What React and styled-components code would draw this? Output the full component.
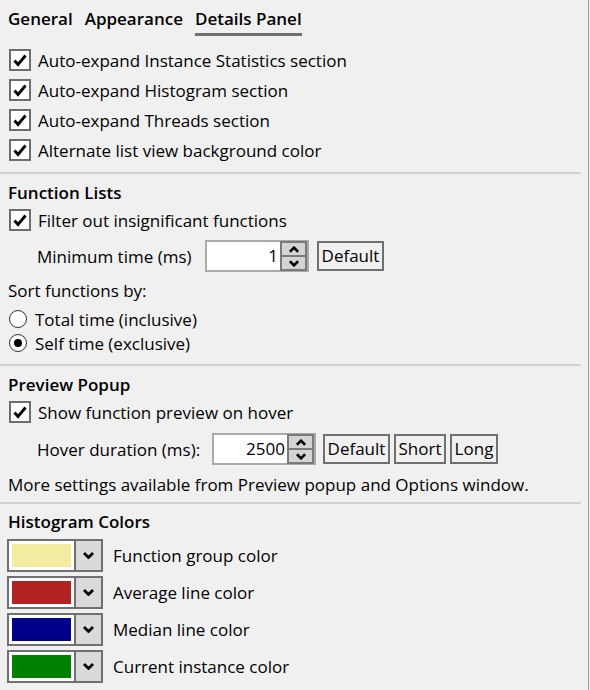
import React, { useState } from 'react'
import styled, { createGlobalStyle } from 'styled-components'

const Global = createGlobalStyle`
    html, body {
        margin: 0;
        padding: 0;
        background: #f0f0f0;
    }
    body {
        font-family: "Open Sans", "Noto Sans", sans-serif;
        color: #000;
    }
`

const Panel = styled.div`
    width: 589px;
    height: 690px;
    box-sizing: border-box;
    border-right: 1px solid #a0a0a0;
    background: #f0f0f0;
    display: flex;
    flex-direction: column;
    font-size: 17px;
    overflow: hidden;
`

const Tabs = styled.div`
    display: flex;
    gap: 12px;
    padding: 0 8px;
    height: 38px;
    align-items: flex-start;
`

const Tab = styled.div`
    font-weight: 600;
    font-size: 17px;
    padding-top: 7px;
    height: 26px;
    line-height: 24px;
    border-bottom: 3px solid ${p => (p.active ? '#707070' : 'transparent')};
    box-sizing: content-box;
`

const Section = styled.div`
    display: flex;
    flex-direction: column;
    padding: 0 8px;
    margin-top: ${p => p.top || 0}px;
`

const Separator = styled.div`
    width: 581px;
    height: 2px;
    background: #d2d2d2;
    margin-top: ${p => p.top || 0}px;
`

const Header = styled.div`
    height: 24px;
    line-height: 24px;
    font-weight: 600;
    margin-top: ${p => p.top || 0}px;
`

const Text = styled.div`
    height: 24px;
    line-height: 24px;
    margin-top: ${p => p.top || 0}px;
`

const CheckRow = styled.label`
    display: flex;
    align-items: center;
    gap: 7px;
    height: 30px;
    padding-left: 1px;
`

const Box = styled.span`
    width: 18px;
    height: 18px;
    border: 2px solid #6e6e6e;
    background: #fff;
    display: flex;
    align-items: center;
    justify-content: center;
    flex-shrink: 0;
`

const RadioRow = styled.label`
    display: flex;
    align-items: center;
    gap: 8px;
    height: 24px;
    padding-left: 1px;
`

const Circle = styled.span`
    width: 16px;
    height: 16px;
    border: 1.5px solid #333;
    border-radius: 50%;
    background: #fff;
    display: flex;
    align-items: center;
    justify-content: center;
    flex-shrink: 0;
    &::after {
        content: '';
        width: 8px;
        height: 8px;
        border-radius: 50%;
        background: ${p => (p.on ? '#000' : 'transparent')};
    }
`

const FieldRow = styled.div`
    display: flex;
    align-items: center;
    height: 32px;
    padding-left: 29px;
    margin-top: ${p => p.top || 0}px;
`

const FieldLabel = styled.span`
    width: ${p => p.w}px;
`

const Spin = styled.div`
    width: 104px;
    height: 32px;
    box-sizing: border-box;
    border: 2px solid #aaaaaa;
    background: #fff;
    display: flex;
    align-items: stretch;
    margin-right: ${p => p.gap}px;
`

const SpinValue = styled.div`
    flex: 1;
    text-align: right;
    line-height: 28px;
    padding-right: 2px;
`

const SpinButtons = styled.div`
    width: 23px;
    display: flex;
    flex-direction: column;
    border: 2px solid #7a7a7a;
    margin: -1px 0;
    background: #d4d4d4;
    & > span {
        flex: 1;
        display: flex;
        align-items: center;
        justify-content: center;
    }
    & > span + span {
        border-top: 2px solid #7a7a7a;
    }
`

const Button = styled.button`
    height: 30px;
    width: ${p => p.w}px;
    box-sizing: border-box;
    border: 2px solid #707070;
    background: #f0f0f0;
    font-family: inherit;
    font-size: 17px;
    padding: 0;
    margin-right: 4px;
    color: #000;
    line-height: 26px;
`

const ColorRow = styled.div`
    display: flex;
    align-items: center;
    gap: 10px;
    height: 33px;
    margin-top: ${p => p.top || 0}px;
    margin-left: -1px;
`

const ColorCombo = styled.div`
    width: 96px;
    height: 33px;
    box-sizing: border-box;
    border: 2px solid #707070;
    display: flex;
    flex-shrink: 0;
`

const Swatch = styled.div`
    width: 67px;
    box-sizing: border-box;
    background: #fff;
    padding: 3px;
    border-right: 2px solid #707070;
    & > div {
        width: 100%;
        height: 100%;
        background: ${p => p.color};
    }
`

const Drop = styled.div`
    flex: 1;
    background: #dadada;
    display: flex;
    align-items: center;
    justify-content: center;
`

const Check = () => (
    <svg width="16" height="16" viewBox="0 0 16 16">
        <path d="M2.5 8.5 L6 12.5 L13.5 3.5" fill="none" stroke="#000" strokeWidth="2.8" />
    </svg>
)

const Chevron = ({ up, w = 11 }) => (
    <svg width={w} height="7" viewBox="0 0 11 7">
        <path d={up ? 'M1 6 L5.5 1.5 L10 6' : 'M1 1 L5.5 5.5 L10 1'} fill="none" stroke="#000" strokeWidth="2.8" />
    </svg>
)

function CheckItem({ label }) {
    return (
        <CheckRow>
            <Box><Check /></Box>
            {label}
        </CheckRow>
    )
}

function SpinBox({ value, gap }) {
    return (
        <Spin gap={gap}>
            <SpinValue>{value}</SpinValue>
            <SpinButtons>
                <span><Chevron up w={10} /></span>
                <span><Chevron w={10} /></span>
            </SpinButtons>
        </Spin>
    )
}

const colors = [
    { color: '#f2eba0', label: 'Function group color' },
    { color: '#b22222', label: 'Average line color' },
    { color: '#00008b', label: 'Median line color' },
    { color: '#008000', label: 'Current instance color' },
]

export default function App() {
    const [sort, setSort] = useState('self')

    return (
        <>
            <Global />
            <Panel>
                <Tabs>
                    <Tab>General</Tab>
                    <Tab>Appearance</Tab>
                    <Tab active>Details Panel</Tab>
                </Tabs>
                <Section top={7}>
                    <CheckItem label="Auto-expand Instance Statistics section" />
                    <CheckItem label="Auto-expand Histogram section" />
                    <CheckItem label="Auto-expand Threads section" />
                    <CheckItem label="Alternate list view background color" />
                </Section>
                <Separator top={7} />
                <Section>
                    <Header top={7}>Function Lists</Header>
                    <CheckItem label="Filter out insignificant functions" />
                    <FieldRow top={5}>
                        <FieldLabel w={168}>Minimum time (ms)</FieldLabel>
                        <SpinBox value="1" gap={8} />
                        <Button w={67}>Default</Button>
                    </FieldRow>
                    <Text top={7}>Sort functions by:</Text>
                    <Section top={4} style={{ padding: 0 }}>
                        <RadioRow onClick={() => setSort('total')}>
                            <Circle on={sort === 'total'} />
                            Total time (inclusive)
                        </RadioRow>
                        <RadioRow onClick={() => setSort('self')}>
                            <Circle on={sort === 'self'} />
                            Self time (exclusive)
                        </RadioRow>
                    </Section>
                </Section>
                <Separator top={9} />
                <Section>
                    <Header top={7}>Preview Popup</Header>
                    <CheckItem label="Show function preview on hover" />
                    <FieldRow top={6}>
                        <FieldLabel w={175}>Hover duration (ms):</FieldLabel>
                        <SpinBox value="2500" gap={7} />
                        <Button w={67}>Default</Button>
                        <Button w={52}>Short</Button>
                        <Button w={48}>Long</Button>
                    </FieldRow>
                    <Text top={8}>More settings available from Preview popup and Options window.</Text>
                </Section>
                <Separator top={5} />
                <Section>
                    <Header top={6}>Histogram Colors</Header>
                    {colors.map((c, i) => (
                        <ColorRow key={c.label} top={i === 0 ? 5 : 4}>
                            <ColorCombo>
                                <Swatch color={c.color}><div /></Swatch>
                                <Drop><Chevron /></Drop>
                            </ColorCombo>
                            {c.label}
                        </ColorRow>
                    ))}
                </Section>
            </Panel>
        </>
    )
}
